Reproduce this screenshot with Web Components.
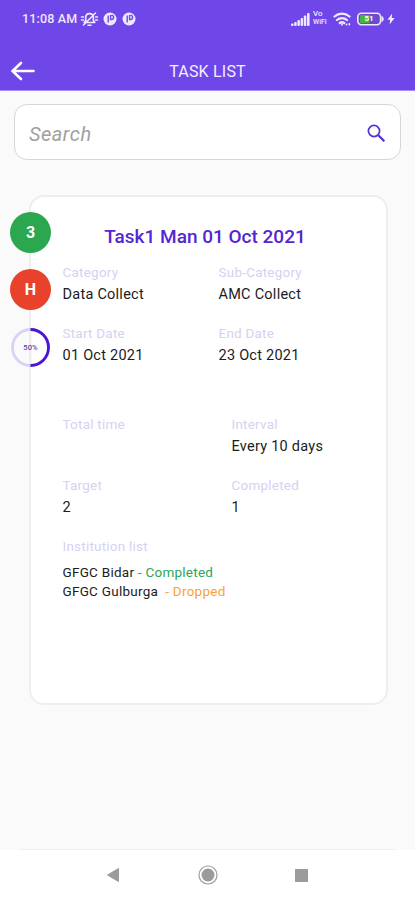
<!DOCTYPE html>
<html lang="en">
<head>
<meta charset="utf-8">
<title>Task List</title>
<style>
html,body{margin:0;height:100%;background:#fafafa}
body{font-family:Roboto,"Liberation Sans",sans-serif}
</style>
</head>
<body>
<task-app></task-app>
<script>
function define(name, html) {
  const t = document.createElement('template');
  t.innerHTML = html;
  customElements.define(name, class extends HTMLElement {
    constructor() {
      super();
      this.attachShadow({mode: 'open'}).append(t.content.cloneNode(true));
    }
  });
}

define('status-bar', `
<style>
:host{display:flex;height:38px;box-sizing:border-box;padding:0 20px 0 22px;align-items:center;justify-content:space-between;color:#eee8ff}
.l{display:flex;align-items:center}
.t{font-size:12.500px;font-weight:500;letter-spacing:.15px;line-height:38px;white-space:nowrap;width:58px}
svg{display:block;overflow:visible}
.r{display:flex;align-items:center}
.vo{font-weight:500;margin-left:3px;width:17px}
.vo div{font-size:8px;line-height:9px;height:9px;margin-top:-2px}
.vo div+div{font-size:7px;line-height:9px;margin-top:0}
.bat{position:relative;width:27px;height:14px;margin-left:5px}
.bat span{position:absolute;left:0;width:24px;top:0;text-align:center;font-size:8px;line-height:14px;font-weight:700;color:#fff}
</style>
<div class="l"><span class="t">11:08 AM</span>
<svg width="19" height="18" viewBox="0 0 19 18" fill="none" stroke="#eee8ff" stroke-width="1.600" stroke-linecap="round" stroke-linejoin="round"><path d="M4.200 12.500h10.600l-1.500-2V7.800c0-2.600-1.500-4.200-3.800-4.200S5.700 5.200 5.700 7.800v2.700z M8 15.300h3 M3.500 15 15.500 3 M1.500 7h2 M15.500 7h2 M1.500 10h2 M15.500 10h2"/></svg>
<svg style="margin-left:4px" width="14" height="14" viewBox="0 0 14 14"><circle cx="7" cy="7" r="6.500" fill="#eee8ff"/><path d="M5.200 10.500V3.500M7.600 3v4.500h.8a2.200 2.200 0 0 0 0-4.400" fill="none" stroke="#6f46e8" stroke-width="1.400"/></svg>
<svg style="margin-left:5px" width="14" height="14" viewBox="0 0 14 14"><circle cx="7" cy="7" r="6.500" fill="#eee8ff"/><path d="M5.200 10.500V3.500M7.600 3v4.500h.8a2.200 2.200 0 0 0 0-4.400" fill="none" stroke="#6f46e8" stroke-width="1.400"/></svg>
</div>
<div class="r">
<svg width="19" height="13" viewBox="0 0 19 13" fill="#eee8ff"><rect x="0" y="10.500" width="2.600" height="2.500" rx="1"/><rect x="3.200" y="9" width="2.500" height="4" rx="1"/><rect x="6.400" y="7" width="2.500" height="6" rx="1"/><rect x="9.600" y="5" width="2.500" height="8" rx="1"/><rect x="12.800" y="2.600" width="2.500" height="10.400" rx="1"/><rect x="16" y="0" width="2.600" height="13" rx="1"/></svg>
<div class="vo"><div>Vo</div><div>WiFi</div></div>
<svg style="margin-left:3px" width="19" height="14" viewBox="0 0 19 14" fill="none" stroke="#eee8ff" stroke-width="2.300" stroke-linecap="round"><path d="M1.500 4.500a11.500 11.500 0 0 1 15 0M4 8a7.500 7.500 0 0 1 10 0M6.800 11a3.800 3.800 0 0 1 4.400 0"/><path d="M9 12.500v.3M13.500 12.500v.1M16.300 12v.6" stroke-width="1.800"/></svg>
<div class="bat"><svg width="27" height="14" viewBox="0 0 27 14"><rect x=".8" y="1.300" width="22.800" height="11.400" rx="3.600" fill="#6b4bd0" stroke="#eee8ff" stroke-width="1.600"/><path d="M4.500 3h8v8h-8a1.500 1.500 0 0 1-1.500-1.500v-5A1.500 1.500 0 0 1 4.500 3z" fill="#45b83c"/><path d="M25 4.500c1.600.8 1.600 4.200 0 5z" fill="#eee8ff" stroke="#eee8ff"/></svg><span>51</span></div>
<svg style="margin-left:3px" width="8" height="12" viewBox="0 0 8 12"><path d="M5.200.5.5 6.800h2.800L2.600 11.500 7.500 5H4.600z" fill="#f4f0ff"/></svg>
</div>`);

define('app-bar', `
<style>
:host{display:grid;grid-template-columns:46px 1fr 46px;align-items:center;height:53px;box-sizing:border-box;padding-top:14px;border-bottom:1px solid #a58cf3}
svg{display:block;margin-left:10px}
h1{margin:0;text-align:center;font-size:16px;font-weight:400;line-height:24px;letter-spacing:.2px;color:#f3efff;padding-top:1px}
</style>
<svg width="26" height="20" viewBox="0 0 26 20" fill="none" stroke="#fff" stroke-width="2.600" stroke-linecap="round"><path d="M2.500 10H23.500M11 2 2.500 10l8.500 8"/></svg>
<h1><slot></slot></h1>`);

define('search-box', `
<style>
:host{display:flex;align-items:center;justify-content:space-between;height:56px;box-sizing:border-box;border:1.500px solid #d6d6d6;border-radius:13px;background:#fff;padding:0 14px 0 14px}
span{font-size:20px;font-style:italic;color:#a0a0a0;line-height:30px;padding-top:3px;letter-spacing:.5px}
svg{display:block;margin-top:2px}
</style>
<span><slot></slot></span>
<svg width="19" height="19" viewBox="0 0 19 19" fill="none" stroke="#5530d8"><circle cx="7" cy="7" r="5.600" stroke-width="1.700"/><path d="M11.300 11.300 17.300 17.300" stroke-width="2.300"/></svg>`);

define('status-dot', `
<style>
:host{display:flex;align-items:center;justify-content:center;width:41px;height:41px;border-radius:50%;background:var(--dot);color:#fff;font-size:16px;font-weight:700}
</style><slot></slot>`);

define('progress-ring', `
<style>
:host{display:grid;width:41px;height:41px;place-items:center}
svg,span{grid-area:1/1}
span{font-size:7.500px;font-weight:500;color:#5b43b8;letter-spacing:.2px}
</style>
<svg width="41" height="41" viewBox="0 0 41 41" fill="none" stroke-width="2.800"><path d="M20.500 3v35" stroke="#eee" stroke-width="2"/><circle cx="20.500" cy="20.500" r="18" stroke="#d9d2f5"/><path d="M20.500 2.500a18 18 0 0 1 0 36" stroke="#4a14d2"/></svg>
<span><slot></slot></span>`);

define('data-field', `
<style>
:host{display:block;height:45px;margin-bottom:-1px;line-height:22px;white-space:nowrap}
.l{color:#d6d1f1;font-size:13.500px;letter-spacing:.22px}
.v{color:#1c1c1c;font-size:14.500px;letter-spacing:.25px;padding-top:1px}
</style>
<div class="l"><slot name="label"></slot></div><div class="v"><slot></slot></div>`);

define('task-card', `
<style>
:host{display:block;position:relative;box-sizing:border-box;width:359px;height:510px;background:#fff;border:2.500px solid #eee;border-radius:15px;padding:28px 0 0 32px}
h2{margin:0 0 12px -32px;font-size:19px;font-weight:500;line-height:24px;color:#5426d3;text-align:center;white-space:nowrap;padding-right:6px}
.g{display:grid;grid-template-columns:156px 1fr;row-gap:17px}
.g2{grid-template-columns:169px 1fr;margin:47px 0 17px}
.badges{position:absolute;left:-20.500px;top:14.500px;display:flex;flex-direction:column;gap:16.500px}
</style>
<h2><slot name="title"></slot></h2>
<div class="g"><slot name="dates"></slot></div>
<div class="g g2"><slot name="numbers"></slot></div>
<slot></slot>
<div class="badges"><slot name="badge"></slot></div>`);

define('institution-list', `
<style>
:host{display:flex;flex-direction:column;font-size:13.500px;color:#1c1c1c;white-space:pre;letter-spacing:.25px}
.l{line-height:22px;color:#d6d1f1;letter-spacing:.22px;margin-bottom:6px}
.row{line-height:19px}
.ok{color:#27a65a}.drop{color:#f7a334}
</style><div class="l">Institution list</div><div class="row">GFGC Bidar <span class="ok">- Completed</span></div><div class="row">GFGC Gulburga  <span class="drop">- Dropped</span></div>`);

define('nav-bar', `
<style>
:host{display:grid;grid-template-columns:113px 1fr 113px;height:50px;background:#fff;align-items:center;position:relative}
:host::before{content:"";position:absolute;top:-1px;left:20px;right:20px;height:1px;background:#f0f0f0}
svg{display:block;justify-self:center}
svg:first-of-type{justify-self:end;margin-right:-6px}
svg:last-of-type{justify-self:start;margin-left:-7px}
</style>
<svg width="12" height="14" viewBox="0 0 12 14"><path d="M11.500.5v13L.5 7z" fill="#9b9b9b" stroke="#9b9b9b"/></svg>
<svg width="20" height="20" viewBox="0 0 20 20"><circle cx="10" cy="10" r="9" fill="none" stroke="#9b9b9b" stroke-width="1.200"/><circle cx="10" cy="10" r="6.500" fill="#9b9b9b"/></svg>
<svg width="13" height="13"><rect width="13" height="13" rx=".5" fill="#9b9b9b"/></svg>`);

define('task-app', `
<style>
:host{display:flex;flex-direction:column;width:415px;height:900px;background:#fafafa;overflow:hidden}
header{background:#6f46e8}
main{flex:1;display:flex;flex-direction:column}
search-box{margin:13px 14px 35px}
task-card{margin-left:28.500px}
</style>
<header><status-bar></status-bar><app-bar>TASK LIST</app-bar></header>
<main>
<search-box>Search</search-box>
<task-card>
<span slot="title">Task1 Man 01 Oct 2021</span>
<data-field slot="dates"><span slot="label">Category</span>Data Collect</data-field>
<data-field slot="dates"><span slot="label">Sub-Category</span>AMC Collect</data-field>
<data-field slot="dates"><span slot="label">Start Date</span>01 Oct 2021</data-field>
<data-field slot="dates"><span slot="label">End Date</span>23 Oct 2021</data-field>
<data-field slot="numbers"><span slot="label">Total time</span></data-field>
<data-field slot="numbers"><span slot="label">Interval</span>Every 10 days</data-field>
<data-field slot="numbers"><span slot="label">Target</span>2</data-field>
<data-field slot="numbers"><span slot="label">Completed</span>1</data-field>
<institution-list></institution-list>
<status-dot slot="badge" style="--dot:#2ba84f">3</status-dot>
<status-dot slot="badge" style="--dot:#e8412c">H</status-dot>
<progress-ring slot="badge">50%</progress-ring>
</task-card>
</main>
<nav-bar></nav-bar>`);
</script>
</body>
</html>
